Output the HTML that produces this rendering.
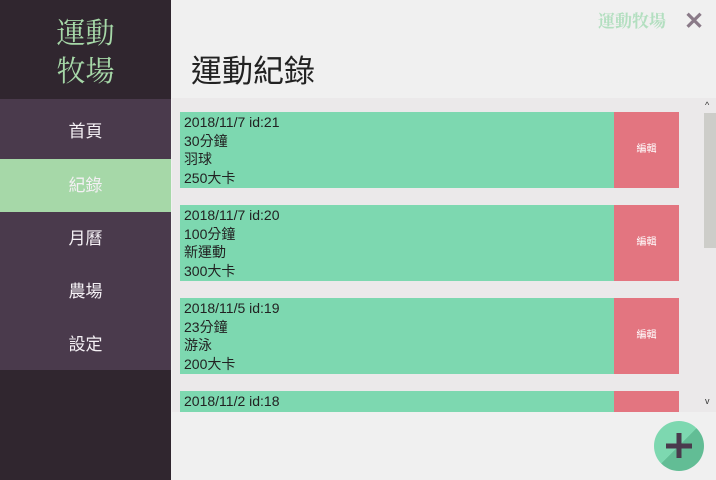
<!DOCTYPE html><html><head><meta charset="utf-8"><style>
*{margin:0;padding:0;box-sizing:border-box}
body{width:716px;height:480px;overflow:hidden;background:#f0f0f0;font-family:"Liberation Sans","Noto Sans CJK TC",sans-serif;position:relative}
.side{position:absolute;left:0;top:0;width:171px;height:480px;background:#30262f}
.logo{position:absolute;left:0;top:13px;width:171px;text-align:center;color:#a6d8a8;font-family:"Noto Serif CJK SC",serif;font-size:29px;line-height:38px}
.menu{position:absolute;left:0;top:99px;width:171px;height:271px;background:#4a3a4c}
.mi{height:53px;line-height:53px;text-align:center;color:#f4f0f4;font-size:17px}
.mi:first-child{height:60px;line-height:66px}
.mi.a{background:#a6d8a8}
h1{position:absolute;left:191px;top:46px;font-weight:normal;font-size:31px;color:#222}
.brand{position:absolute;left:598px;top:7px;font-family:"Noto Serif CJK SC",serif;color:#b3dfc0;font-size:17px;font-weight:bold}
.x{position:absolute;left:684px;top:7px;color:#8a7a88;font-size:24px;font-weight:bold}
.list{position:absolute;left:172px;top:98px;width:544px;height:314px;background:#ebe9ea;overflow:hidden}
.sb{position:absolute;left:530px;top:0;width:14px;height:314px;background:#ebe9ea}
.thumb{position:absolute;left:532px;top:15px;width:12px;height:135px;background:#cdcdc9}
.card{position:absolute;left:8px;width:499px;height:76px;background:#7dd8b0;font-size:14px;line-height:18.5px;color:#222;padding:1px 4px}
.ed{position:absolute;right:0;top:0;width:65px;height:76px;background:#e37580;color:#fff;font-size:10px;text-align:center;line-height:76px}
.fab{position:absolute;left:654px;top:421px;width:50px;height:50px;border-radius:50%;background:linear-gradient(135deg,#7dd8b0 50%,#62bd95 50%)}
</style></head><body>
<div class="side"><div class="logo">運動<br>牧場</div>
<div class="menu"><div class="mi">首頁</div><div class="mi a">紀錄</div><div class="mi">月曆</div><div class="mi">農場</div><div class="mi">設定</div></div></div>
<div class="brand">運動牧場</div><div class="x">✕</div>
<h1>運動紀錄</h1>
<div class="list">
<div class="card" style="top:14px">2018/11/7 id:21<br>30分鐘<br>羽球<br>250大卡<div class="ed">編輯</div></div>
<div class="card" style="top:107px">2018/11/7 id:20<br>100分鐘<br>新運動<br>300大卡<div class="ed">編輯</div></div>
<div class="card" style="top:200px">2018/11/5 id:19<br>23分鐘<br>游泳<br>200大卡<div class="ed">編輯</div></div>
<div class="card" style="top:293px">2018/11/2 id:18<br>20分鐘<div class="ed"></div></div>
<div class="sb"><div style="position:absolute;top:2px;left:3px;font-size:9px;color:#333">^</div><div style="position:absolute;top:298px;left:3px;font-size:9px;color:#333">v</div></div>
<div class="thumb"></div>
</div>
<div class="fab"><svg width="50" height="50"><path d="M25 12V37M12 25H38" stroke="#4a3a4c" stroke-width="5"/></svg></div>
</body></html>
